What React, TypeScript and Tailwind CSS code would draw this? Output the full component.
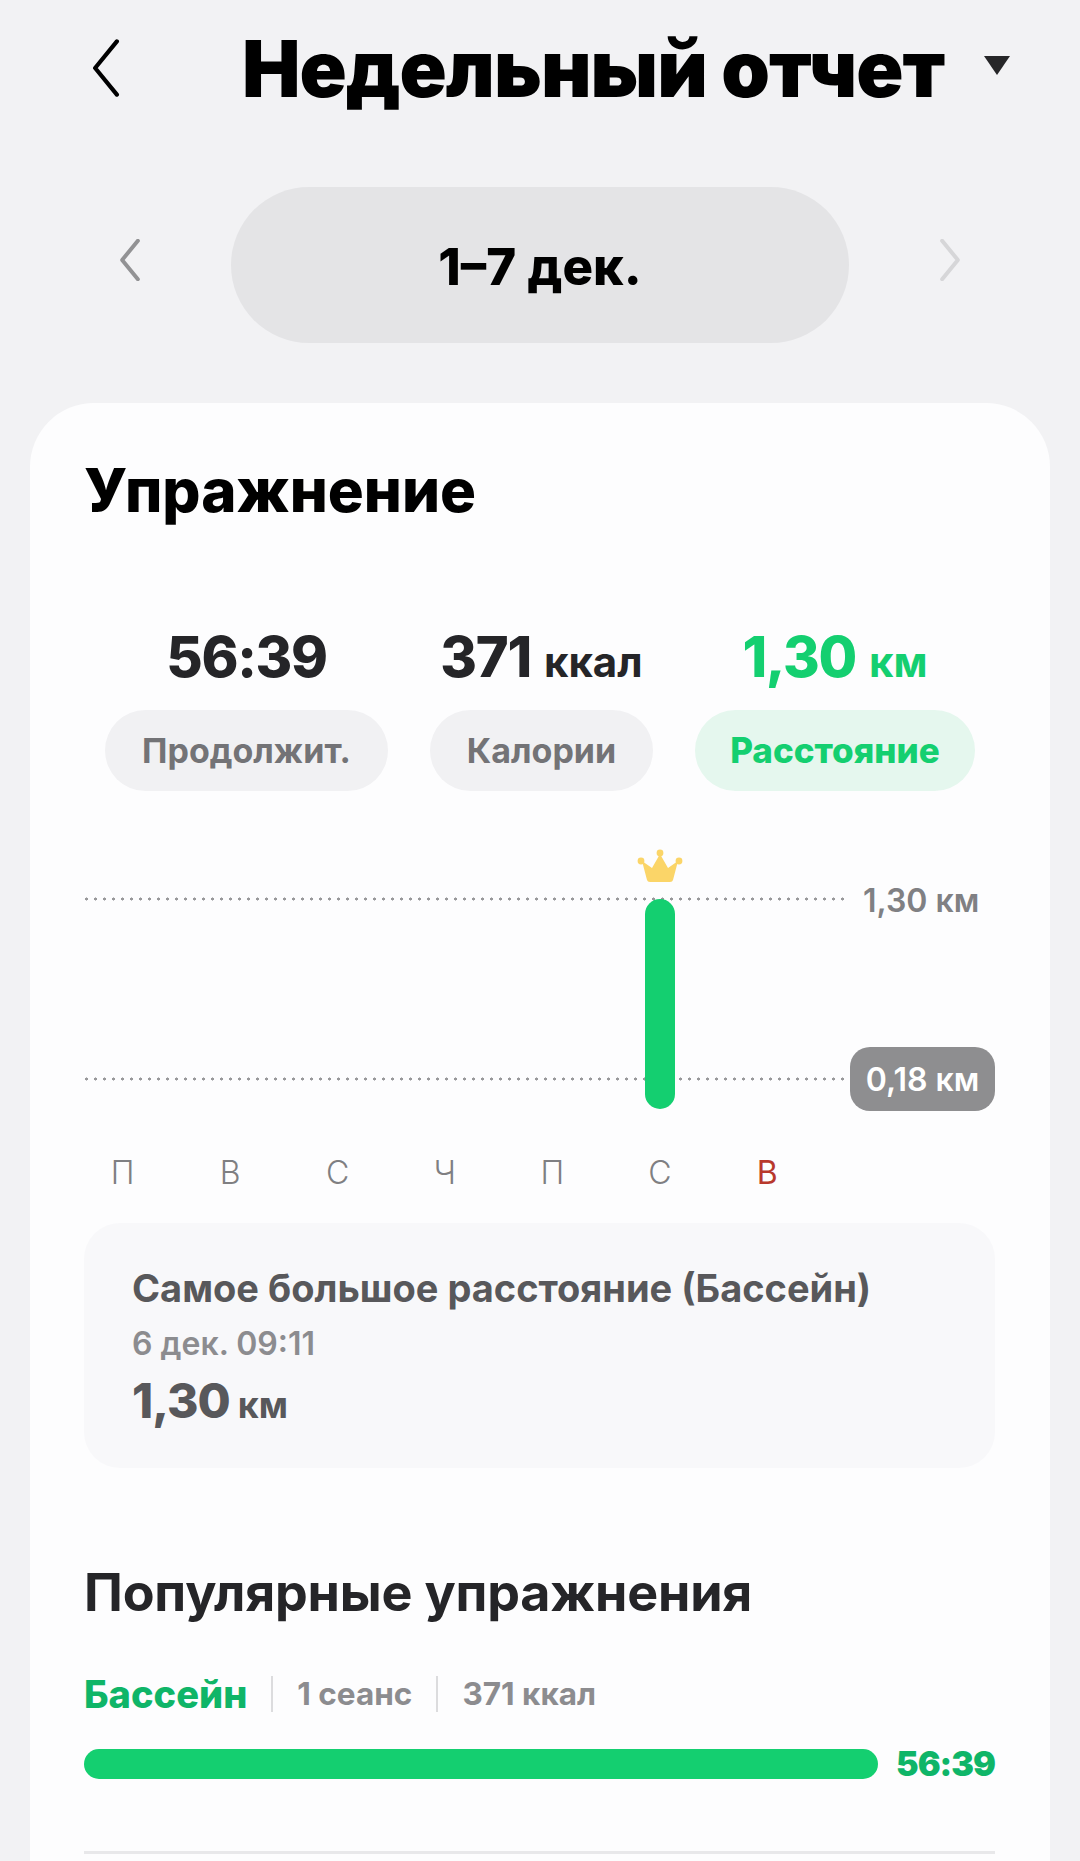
import React from 'react';

const days = ['П', 'В', 'С', 'Ч', 'П', 'С', 'В'];

const Chevron: React.FC<{ className: string; flip?: boolean; width?: number }> = ({ className, flip, width = 4 }) => (
  <svg viewBox="0 0 24 48" fill="none" stroke="currentColor" strokeWidth={width} strokeLinecap="round" strokeLinejoin="round" className={className}>
    <path d={flip ? 'M3 2 L21 24 L3 46' : 'M21 2 L3 24 L21 46'} />
  </svg>
);

const Crown: React.FC = () => (
  <svg viewBox="0 0 46 34" className="w-[46px] h-[34px]" fill="#fbd568">
    <circle cx="23" cy="4" r="3.400" />
    <circle cx="4" cy="12" r="3.400" />
    <circle cx="42" cy="12" r="3.400" />
    <path d="M23 5 L31 19 L41 12 L36 31 Q35.500 33 33 33 L13 33 Q10.500 33 10 31 L5 12 L15 19 Z" />
  </svg>
);

const Stat: React.FC<{ value: string; unit?: string; label: string; active?: boolean; pill: string }> = ({ value, unit, label, active, pill }) => (
  <div className="flex flex-col items-center">
    <div className={`h-[70px] flex items-baseline gap-[13px] font-extrabold ${active ? 'text-[#14cf70]' : 'text-[#252528]'}`}>
      <span className="text-[56px] leading-[70px] tracking-[-1.300px]">{value}</span>
      {unit && <span className="text-[42px] font-bold">{unit}</span>}
    </div>
    <div className={`mt-[18px] h-[81px] rounded-full flex items-center justify-center ${pill} ${active ? 'bg-[#e5f7ee] text-[#14cf70] text-[35px] font-extrabold' : 'bg-[#f1f1f3] text-[#737376] text-[34px] font-bold'}`}>
      {label}
    </div>
  </div>
);

// horizontal guide made of sparse round dots
const DottedLine: React.FC<{ top: string }> = ({ top }) => (
  <div className={`absolute -left-[2px] ${top} w-[766px] h-[4px] bg-[radial-gradient(circle,#98989a_1.300px,transparent_1.800px)] bg-[length:9px_4px]`} />
);

export default function App() {
  return (
    <div className="relative w-[1080px] h-[1861px] overflow-hidden bg-[#f2f2f4] font-['Inter',sans-serif]">
      {/* Header */}
      <div className="h-[136px] flex items-center pl-[90px]">
        <Chevron className="w-[32px] h-[58px] text-black" width={3.500} />
        <h1 className="ml-[120px] text-[78px] font-black text-black whitespace-nowrap tracking-[-1px]">Недельный отчет</h1>
        <div className="ml-[40px] -mt-[6px] w-0 h-0 border-l-[13px] border-r-[13px] border-t-[19px] border-l-transparent border-r-transparent border-t-[#262628]" />
      </div>

      {/* Week switcher */}
      <div className="mt-[51px] flex items-center pl-[118px]">
        <Chevron className="-mt-[10px] w-[24px] h-[42px] text-[#929294]" width={4.500} />
        <div className="ml-[89px] w-[618px] h-[156px] pt-[4px] rounded-full bg-[#e4e4e6] flex items-center justify-center text-[51px] font-extrabold text-black">
          1–7 дек.
        </div>
        <Chevron className="-mt-[10px] ml-[89px] w-[24px] h-[42px] text-[#d6d6d8]" flip width={4.500} />
      </div>

      {/* Main card */}
      <div className="mt-[60px] mx-[30px] h-[1600px] rounded-t-[64px] bg-[#fdfdfe] pl-[54px] pr-[55px] pt-[51px]">
        <h2 className="text-[60px] font-extrabold leading-[72px] text-black">Упражнение</h2>

        <div className="mt-[96px] flex items-start ml-[21px] gap-[42px]">
          <Stat value="56:39" label="Продолжит." pill="w-[283px]" />
          <Stat value="371" unit="ккал" label="Калории" pill="w-[223px]" />
          <Stat value="1,30" unit="км" label="Расстояние" active pill="w-[280px]" />
        </div>

        {/* Distance chart */}
        <div className="relative mt-[60px] h-[260px]">
          <div className="absolute left-[553px] -top-[2px]"><Crown /></div>
          <DottedLine top="top-[46px]" />
          <DottedLine top="top-[226px]" />
          <div className="absolute left-[561px] top-[48px] w-[30px] h-[210px] rounded-full bg-[#14cf70]" />
          <div className="absolute left-[779px] top-[26px] text-[32px] font-semibold text-[#808083]">1,30 км</div>
          <div className="absolute right-0 top-[196px] w-[145px] h-[64px] pt-[1px] rounded-[20px] bg-[#8e8e90] flex items-center justify-center text-[32px] font-semibold text-white">
            0,18 км
          </div>
        </div>

        <div className="mt-[42px] w-[752px] -ml-[15px] grid grid-cols-7 text-center text-[32px] leading-[40px] font-light text-[#7f7f82]">
          {days.map((d, i) => (
            <span key={i} className={i === 6 ? 'text-[#b8382c] font-normal' : ''}>{d}</span>
          ))}
        </div>

        {/* Longest distance record */}
        <div className="mt-[30px] h-[245px] rounded-[36px] bg-[#f8f8fa] pl-[48px] pt-[42px]">
          <div className="text-[38px] leading-[46px] font-bold text-[#58585b]">Самое большое расстояние (Бассейн)</div>
          <div className="mt-[13px] text-[32px] leading-[40px] font-semibold text-[#8c8c8f]">6 дек. 09:11</div>
          <div className="mt-[6px] flex items-baseline gap-2 font-extrabold text-[#58585b]">
            <span className="text-[48px] leading-[62px] tracking-[-1px]">1,30</span>
            <span className="text-[36px] font-bold">км</span>
          </div>
        </div>

        {/* Popular workouts */}
        <h2 className="mt-[91px] text-[52px] leading-[68px] font-bold tracking-[-0.200px] text-[#252528]">Популярные упражнения</h2>

        <div className="mt-[49px] flex items-center h-[36px] text-[31.500px] font-bold text-[#8c8c8f]">
          <span className="text-[38px] font-extrabold text-[#0fb568]">Бассейн</span>
          <span className="mx-[24px] w-[2px] h-[36px] bg-[#dcdcde]" />
          <span>1 сеанс</span>
          <span className="mx-[24px] w-[2px] h-[36px] bg-[#dcdcde]" />
          <span>371 ккал</span>
        </div>

        <div className="mt-[37px] flex items-center">
          <div className="w-[794px] h-[30px] rounded-full bg-[#14cf70]" />
          <span className="ml-auto text-[34px] leading-[30px] font-black tracking-[-1px] text-[#0fb568]">56:39</span>
        </div>

        <div className="mt-[72px] h-[3px] bg-[#e8e8ea]" />
      </div>
    </div>
  );
}
